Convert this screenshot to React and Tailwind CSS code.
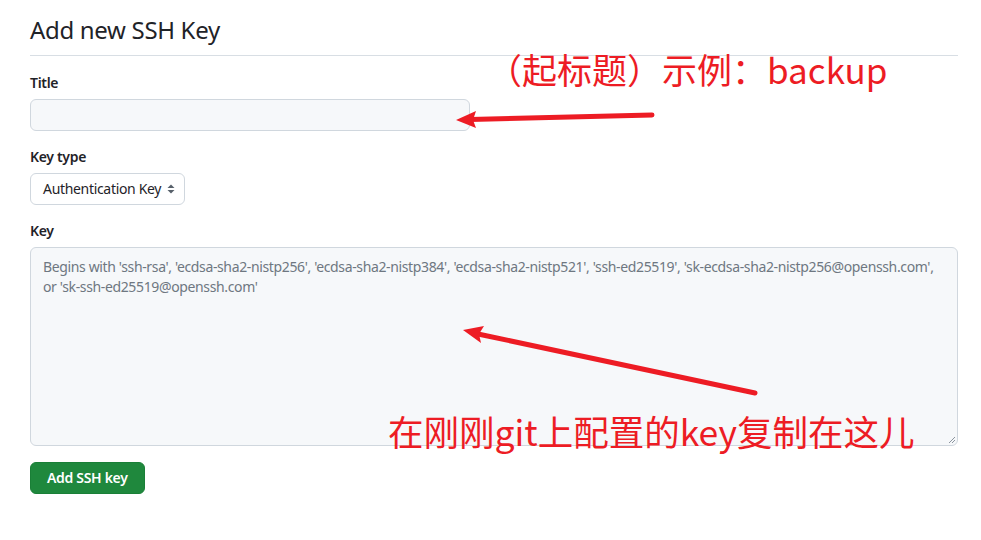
import React from "react";

const ui = { fontFamily: '"Noto Sans", "Liberation Sans", sans-serif' };
const cjk = { fontFamily: '"Noto Sans CJK SC", "Noto Sans", sans-serif' };

const Label = ({ children }) => (
    <div className="text-sm leading-5 font-semibold text-[#1f2328] mb-[6px]">{children}</div>
);

const Arrows = () => (
    <svg className="absolute inset-0 pointer-events-none" width="981" height="540">
        {/* title arrow */}
        <line x1="652" y1="115" x2="470" y2="119.5" stroke="#ed1c24" strokeWidth="5" strokeLinecap="round" />
        <polygon points="456,120 476,111 473,120 476,128" fill="#ed1c24" />
        {/* key arrow */}
        <line x1="755" y1="393" x2="478" y2="334" stroke="#ed1c24" strokeWidth="5" strokeLinecap="round" />
        <polygon points="463,330 484,326 479,334 481,343" fill="#ed1c24" />
    </svg>
);

export default function App() {
    return (
        <div className="relative w-[981px] h-[540px] bg-white overflow-hidden tracking-[-0.02em]" style={ui}>
            <div className="pl-[30px] pr-[23px] pt-3">
                {/* header */}
                <h1 className="text-2xl leading-9 font-normal text-[#1f2328] pb-[7px] border-b border-[#d8dee4]">
                    Add new SSH Key
                </h1>

                <div className="pt-[17px]">
                    <Label>Title</Label>
                    <div className="w-[440px] h-8 rounded-md border border-[#d0d7de] bg-[#f6f8fa]" />
                </div>

                <div className="pt-4">
                    <Label>Key type</Label>
                    <div className="w-[155px] h-8 rounded-md border border-[#d0d7de] bg-white flex items-center justify-between pl-3 pr-[9px] text-sm text-[#1f2328]">
                        <span>Authentication Key</span>
                        <svg width="8" height="12" viewBox="0 0 8 12">
                            <polygon points="4,1.5 7.5,5 0.5,5" fill="#57606a" />
                            <polygon points="4,10.5 7.5,7 0.5,7" fill="#57606a" />
                        </svg>
                    </div>
                </div>

                <div className="pt-4">
                    <Label>Key</Label>
                    <div className="relative h-[199px] rounded-md border border-[#d0d7de] bg-[#f6f8fa] px-3 pt-[9px] text-sm leading-5 tracking-[-0.36px] text-[#6e7781]">
                        <div className="whitespace-nowrap">
                            Begins with 'ssh-rsa', 'ecdsa-sha2-nistp256', 'ecdsa-sha2-nistp384', 'ecdsa-sha2-nistp521', 'ssh-ed25519', 'sk-ecdsa-sha2-nistp256@openssh.com',
                        </div>
                        <div className="whitespace-nowrap">or 'sk-ssh-ed25519@openssh.com'</div>
                        <svg className="absolute right-[1px] bottom-[1px]" width="9" height="9" viewBox="0 0 9 9">
                            <line x1="8" y1="2" x2="2" y2="8" stroke="#8c959f" strokeWidth="1" />
                            <line x1="8" y1="5" x2="5" y2="8" stroke="#8c959f" strokeWidth="1" />
                        </svg>
                    </div>
                </div>

                <div className="pt-4">
                    <button className="h-8 px-4 rounded-md bg-[#1f883d] border border-[#1a7f37] text-white text-sm font-semibold">
                        Add SSH key
                    </button>
                </div>
            </div>

            {/* annotations */}
            <Arrows />
            <div className="absolute left-[487px] top-[51px] text-[35px] leading-none tracking-normal text-[#ed1c24] whitespace-nowrap" style={cjk}>
                （起标题）示例：backup
            </div>
            <div className="absolute left-[388px] top-[413px] text-[35.5px] leading-none tracking-normal text-[#ed1c24] whitespace-nowrap" style={cjk}>
                在刚刚git上配置的key复制在这儿
            </div>
        </div>
    );
}
